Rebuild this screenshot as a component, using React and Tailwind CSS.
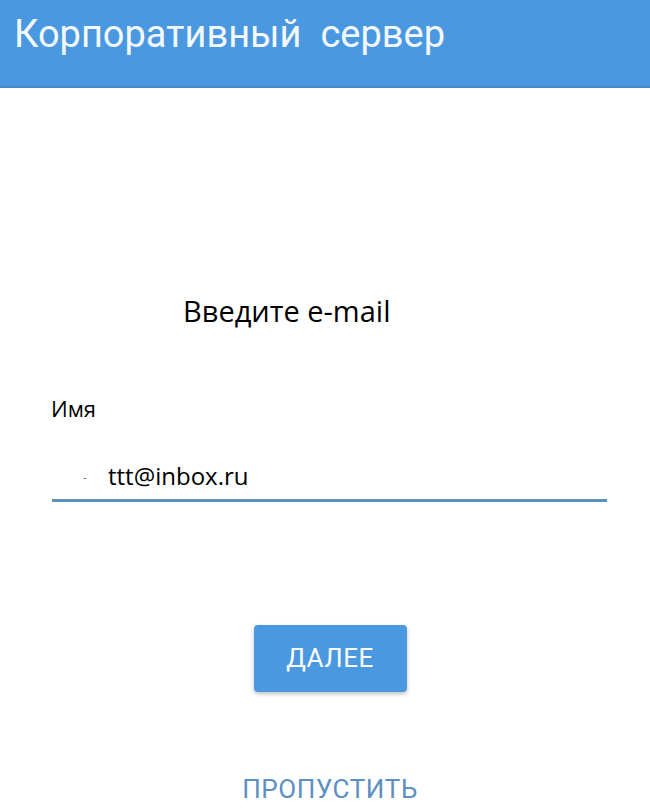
import React, { useState } from 'react';

const App = () => {
  const [email, setEmail] = useState('ttt@inbox.ru');

  return (
    <div className="w-[650px] h-[812px] bg-white overflow-hidden flex flex-col">
      {/* Header */}
      <div className="h-[88px] bg-[#4a98e0] border-b-2 border-[#4289cc] pl-[14px] pt-[11px]">
        <h1 className="text-[38px] leading-[46px] text-[#f4f9ff] font-['Roboto',sans-serif]">
          Корпоративный&nbsp; сервер
        </h1>
      </div>

      {/* Form */}
      <div className="flex flex-col font-['Open_Sans',sans-serif] text-black">
        <p className="mt-[204px] ml-[183px] text-[29px] leading-[38px]">Введите e-mail</p>

        <label className="mt-[63px] ml-[51px] text-[22px] leading-[30px]">Имя</label>

        <div className="mt-[37px] ml-[52px] w-[555px] flex items-center border-b-[3px] border-[#5a92c0] pb-[7px]">
          <span className="w-[56px] pl-[31px] text-[11px] text-gray-600 leading-none">-</span>
          <input
            type="text"
            value={email}
            onChange={(e) => setEmail(e.target.value)}
            className="flex-1 text-[24px] leading-[32px] outline-none bg-transparent"
          />
        </div>
      </div>

      {/* Actions */}
      <div className="flex flex-col items-center font-['Roboto',sans-serif]">
        <button className="mt-[123px] ml-[10px] w-[153px] h-[67px] bg-[#4a98e0] rounded-[4px] shadow-[0_2px_4px_rgba(0,0,0,0.25)] text-white text-[26px] tracking-[0.5px]">
          ДАЛЕЕ
        </button>
        <button className="mt-[81px] ml-[10px] text-[#5c8fc2] text-[26px] tracking-[0.6px] leading-[32px]">
          ПРОПУСТИТЬ
        </button>
      </div>
    </div>
  );
};

export default App;
